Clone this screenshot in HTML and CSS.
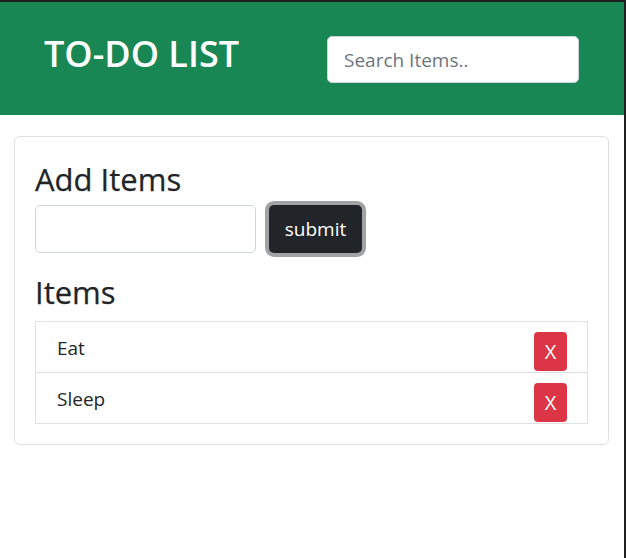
FILE: index.html
```html
<!DOCTYPE html>
<html lang="en">
<head>
<meta charset="utf-8">
<title>TO-DO LIST</title>
<link rel="stylesheet" href="styles.css">
</head>
<body>
<div class="page">
  <header class="topbar">
    <h1 class="brand">TO-DO LIST</h1>
    <input class="search" type="text" placeholder="Search Items..">
  </header>
  <main class="card">
    <h3 class="heading">Add Items</h3>
    <form class="add-form">
      <input class="add-input" type="text">
      <button class="submit" type="button">submit</button>
    </form>
    <h3 class="heading items-heading">Items</h3>
    <ul class="list">
      <li class="list-item"><span class="item-text">Eat</span><button class="delete" type="button">X</button></li>
      <li class="list-item"><span class="item-text">Sleep</span><button class="delete" type="button">X</button></li>
    </ul>
  </main>
</div>
</body>
</html>
```
FILE: styles.css
```css
html {
  background: #1f1f1f;
}
body {
  margin: 0;
  font-family: "Open Sans", "Noto Sans", sans-serif;
  color: #212529;
}
.page {
  margin: 2px 2px 0 0;
  background: #fff;
  min-height: calc(100vh - 2px);
  display: flow-root;
}
.topbar {
  height: 113px;
  background: #198754;
  display: flex;
  align-items: center;
  justify-content: space-between;
  padding: 0 45px 0 44px;
}
.brand {
  margin: 0 0 9px;
  font-size: 36px;
  font-weight: 600;
  line-height: 1.2;
  color: #fff;
}
.search {
  box-sizing: border-box;
  width: 252px;
  height: 47px;
  padding: 0 16px;
  font-family: inherit;
  font-size: 19px;
  color: #212529;
  border: 1px solid #ced4da;
  border-radius: 5px;
  background: #fff;
  margin-top: 2px;
}
.search::placeholder {
  color: #6c757d;
}
.card {
  display: block;
  margin: 21px 15px 0 14px;
  border: 1px solid rgba(0, 0, 0, 0.125);
  border-radius: 6px;
  padding: 24px 20px 20px 20px;
}
.heading {
  margin: 0 0 7px 0;
  font-size: 31px;
  font-weight: 500;
  line-height: 1.2;
  -webkit-text-stroke: 0.25px #212529;
}
.items-heading {
  margin-top: 21px;
  margin-bottom: 10px;
}
.add-form {
  display: flex;
  gap: 13px;
  align-items: center;
}
.add-input {
  box-sizing: border-box;
  width: 221px;
  height: 48px;
  border: 1px solid #ced4da;
  border-radius: 5px;
  font-family: inherit;
  font-size: 19px;
  padding: 0 16px;
}
.submit {
  box-sizing: border-box;
  width: 93px;
  height: 48px;
  border: 0;
  border-radius: 5px;
  background: #212529;
  color: #fff;
  font-family: inherit;
  font-size: 19px;
  box-shadow: 0 0 0 4px rgba(66, 70, 73, 0.5);
  padding: 0;
}
.list {
  list-style: none;
  margin: 0;
  padding: 0;
  border: 1px solid #dee2e6;
}
.list-item {
  display: flex;
  align-items: flex-start;
  justify-content: space-between;
  height: 50px;
  box-sizing: border-box;
  padding: 10px 20px 0 21px;
}
.list-item + .list-item {
  border-top: 1px solid #dee2e6;
  height: 51px;
}
.item-text {
  font-size: 19px;
  line-height: 28px;
  margin-top: 2px;
}
.delete {
  width: 33px;
  height: 39px;
  border: 0;
  border-radius: 4px;
  background: #dc3545;
  color: #fff;
  font-family: inherit;
  font-size: 20px;
  padding: 0;
}
```
